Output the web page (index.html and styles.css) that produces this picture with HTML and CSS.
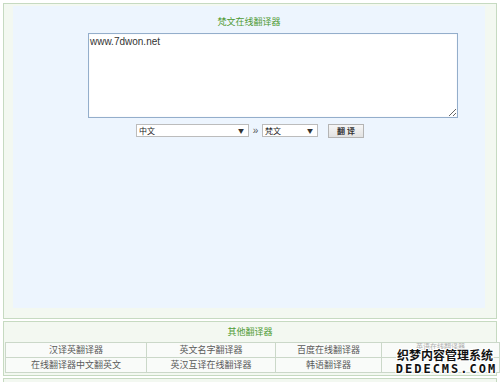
FILE: index.html
```html
<!DOCTYPE html>
<html lang="zh">
<head>
<meta charset="utf-8">
<title>梵文在线翻译器</title>
<link rel="stylesheet" href="styles.css">
</head>
<body>
<div class="main">
  <div class="panel">
    <div class="title">梵文在线翻译器</div>
    <textarea class="source">www.7dwon.net</textarea>
    <div class="controls">
      <span class="select select-from">中文<i class="arrow">▼</i></span>
      <span class="raquo">»</span>
      <span class="select select-to">梵文<i class="arrow">▼</i></span>
      <span class="btn">翻 译</span>
    </div>
  </div>
</div>
<div class="other">
  <div class="other-title">其他翻译器</div>
  <table class="links">
    <tr>
      <td class="c1">汉译英翻译器</td>
      <td class="c2">英文名字翻译器</td>
      <td class="c3">百度在线翻译器</td>
      <td class="c4"><span class="hidden-text">英语在线翻译器</span></td>
    </tr>
    <tr>
      <td class="c1">在线翻译器中文翻英文</td>
      <td class="c2">英汉互译在线翻译器</td>
      <td class="c3">韩语翻译器</td>
      <td class="c4"></td>
    </tr>
  </table>
  <div class="watermark">
    <div class="wm-cn">织梦内容管理系统</div>
    <div class="wm-en">DEDECMS.COM</div>
  </div>
</div>
<div class="next"></div>
</body>
</html>
```
FILE: styles.css
```css
html, body {
  margin: 0;
  padding: 0;
  background: #ffffff;
  font-family: "Noto Sans CJK SC", "Liberation Sans", sans-serif;
}

.main {
  margin: 3px 3px 0;
  border: 1px solid #c6dac1;
  background: #f3f8f1;
  padding: 2px 11px 10px 9px;
}

.panel {
  background: #edf5fe;
  height: 302px;
  display: flex;
  flex-direction: column;
}

.title {
  padding-top: 10px;
  height: 12px;
  line-height: 12px;
  font-size: 9px;
  color: #4f9a33;
  text-align: center;
}

.source {
  display: block;
  margin: 5px 0 0 75px;
  width: 370px;
  height: 85px;
  box-sizing: border-box;
  border: 1px solid #94aecb;
  box-shadow: inset 0 0 1px #c8d6e6;
  background: #ffffff;
  padding: 2px 1px;
  font-family: "Liberation Sans", Arial, sans-serif;
  font-size: 10px;
  line-height: 12px;
  color: #333333;
  resize: both;
  outline: none;
}

.controls {
  margin-top: 5px;
  height: 15px;
  display: flex;
  align-items: center;
  justify-content: center;
  padding-left: 2px;
}

.select {
  position: relative;
  box-sizing: border-box;
  height: 13px;
  border: 1px solid #bcbcbc;
  background: #ffffff;
  font-size: 8px;
  line-height: 11px;
  color: #222222;
  padding-left: 2px;
}

.select-from { width: 113px; }
.select-to { width: 56px; }

.arrow {
  position: absolute;
  right: 4px;
  top: 0;
  font-style: normal;
  font-size: 6px;
  line-height: 11px;
  color: #333333;
}

.raquo {
  width: 13px;
  text-align: center;
  font-family: "Liberation Sans", Arial, sans-serif;
  font-size: 10px;
  line-height: 13px;
  color: #555555;
}

.btn {
  margin-left: 10px;
  box-sizing: border-box;
  width: 36px;
  height: 14px;
  border: 1px solid #b4b4b4;
  background: linear-gradient(#f6f6f6, #e2e2e2);
  font-size: 8px;
  font-weight: bold;
  line-height: 12px;
  text-align: center;
  color: #333333;
}

.other {
  position: relative;
  margin: 2px 3px 0;
  border: 1px solid #c6dac1;
  background: #f3f8f1;
  padding: 0 1px 2px;
}

.other-title {
  height: 20px;
  line-height: 20px;
  font-size: 9px;
  color: #4f9a33;
  text-align: center;
}

.links {
  width: 490px;
  border-collapse: collapse;
  table-layout: fixed;
}

.links td {
  height: 14px;
  padding: 0;
  border: 1px solid #cbd8c9;
  background: #f9fbf9;
  font-size: 9px;
  line-height: 14px;
  color: #5a5a5a;
  text-align: center;
  white-space: nowrap;
  overflow: hidden;
}

.links .c1 { width: 140px; }
.links .c2 { width: 128px; }
.links .c3 { width: 105px; }
.links .c4 { width: 117px; vertical-align: top; }

.hidden-text {
  display: block;
  font-size: 7px;
  line-height: 7px;
  color: #b0b0b0;
}

.watermark {
  position: absolute;
  left: 388px;
  top: 26px;
  width: 106px;
  text-align: center;
  color: #111111;
  text-shadow: 1px 0 0 #fff, -1px 0 0 #fff, 0 1px 0 #fff, 0 -1px 0 #fff, 1px 1px 0 #fff, -1px -1px 0 #fff, 1px -1px 0 #fff, -1px 1px 0 #fff;
}

.wm-cn {
  font-size: 12px;
  font-weight: bold;
  line-height: 14px;
}

.wm-en {
  margin-top: 1px;
  padding-left: 3px;
  font-family: "DejaVu Sans Mono", monospace;
  font-size: 12px;
  font-weight: bold;
  line-height: 12px;
  letter-spacing: 2px;
}

.next {
  margin: 2px 3px 0;
  height: 10px;
  border: 1px solid #c6dac1;
  background: #f3f8f1;
}
```
